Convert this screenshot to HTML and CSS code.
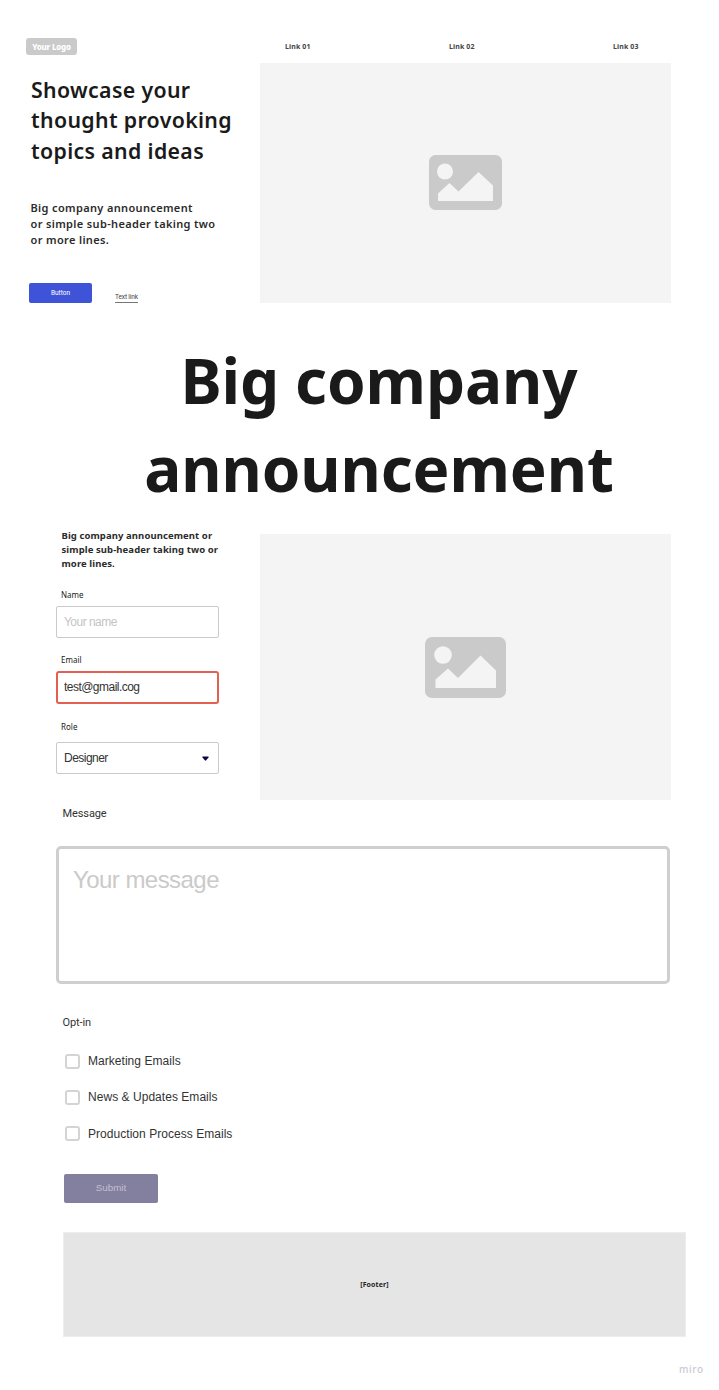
FILE: index.html
```html
<!DOCTYPE html>
<html lang="en">
<head>
<meta charset="utf-8">
<title>Landing page wireframe</title>
<link rel="stylesheet" href="styles.css">
</head>
<body>
<header class="hero">
  <div class="hero-copy">
    <div class="logo">Your Logo</div>
    <h1 class="title">Showcase your<br>thought provoking<br>topics and ideas</h1>
    <p class="subtitle">Big company announcement<br>or simple sub-header taking two<br>or more lines.</p>
    <div class="actions">
      <button class="button">Button</button>
      <a class="text-link">Text link</a>
    </div>
  </div>
  <div class="hero-media">
    <nav class="nav"><a class="nav-link">Link 01</a><a class="nav-link">Link 02</a><a class="nav-link">Link 03</a></nav>
    <div class="placeholder placeholder-hero">
      <svg class="picture" viewBox="0 0 73 55"><rect width="73" height="55" rx="6.5" fill="#cacaca"/><circle cx="16" cy="16.5" r="8" fill="#f4f4f4"/><path d="M9 46V38.5L20.5 28L29.5 36.5L49.500 17L64 30.500V46Z" fill="#f4f4f4"/></svg>
    </div>
  </div>
</header>
<h2 class="headline">Big company<br>announcement</h2>
<form class="form">
  <div class="form-top">
    <div class="fields">
      <p class="intro">Big company announcement or<br>simple sub-header taking two or<br>more lines.</p>
      <label class="label label-name">Name</label>
      <div class="input muted">Your name</div>
      <label class="label label-email">Email</label>
      <div class="input invalid">test@gmail.cog</div>
      <label class="label label-role">Role</label>
      <div class="input select"><span>Designer</span><svg class="caret" viewBox="0 0 7 5"><path d="M1 .5H6Q7 .5 6.500 1.500L4.200 4.300Q3.500 5 2.800 4.300L.5 1.500Q0 .5 1 .5Z" fill="#0d0547"/></svg></div>
    </div>
    <div class="placeholder">
      <svg class="picture picture-large" viewBox="0 0 81 61"><rect width="81" height="61" rx="7" fill="#cacaca"/><circle cx="18" cy="18" r="8.800" fill="#f4f4f4"/><path d="M10.500 51V42.500L23 31.500L33 41L55.500 18.500L71 33.500V51Z" fill="#f4f4f4"/></svg>
    </div>
  </div>
  <label class="group-label">Message</label>
  <div class="message">Your message</div>
  <div class="group-label optin">Opt-in</div>
  <div class="checks">
    <label class="check"><span class="box"></span>Marketing Emails</label>
    <label class="check"><span class="box"></span>News &amp; Updates Emails</label>
    <label class="check"><span class="box"></span>Production Process Emails</label>
  </div>
  <button class="submit" type="button">Submit</button>
</form>
<footer class="footer">[Footer]</footer>
<div class="brand">miro</div>
</body>
</html>
```
FILE: styles.css
```css
* { box-sizing: border-box; }
body { margin: 0; width: 719px; height: 1390px; overflow: hidden; background: #fff; color: #1a1a1a; font-family: "Noto Sans", sans-serif; }
h1, h2, p { margin: 0; white-space: nowrap; }
button { border: 0; padding: 0; display: block; }

.hero { display: grid; grid-template-columns: 234px 411px; padding: 38px 0 0 26px; height: 303px; }
.hero-copy { display: flex; flex-direction: column; }
.logo { width: 51px; height: 17px; border-radius: 3px; background: #cacaca; color: #fff; font: 800 8px/17px "Noto Sans", sans-serif; letter-spacing: -.2px; text-align: center; }
.title { margin: 20px 0 0 5px; font-size: 21.300px; font-weight: 600; line-height: 30.3px; letter-spacing: .34px; }
.subtitle { margin: 34px 0 0 4.500px; font-size: 11px; font-weight: 600; line-height: 16px; letter-spacing: .35px; color: #2b2b2b; }
.actions { display: flex; align-items: flex-end; gap: 23px; margin: auto 0 0 3px; }
.button { width: 63px; height: 20px; border-radius: 2px; background: #3f53d9; color: #fff; font: 6.500px/20px Roboto, sans-serif; }
.text-link { width: 23px; height: 12px; padding-top: 1px; white-space: nowrap; border-bottom: 1px solid #777; font: 6.500px/10px Roboto, sans-serif; letter-spacing: -.12px; color: #444; }
.hero-media { display: flex; flex-direction: column; }
.nav { display: flex; gap: 138px; height: 25px; padding-left: 25px; }
.nav-link { width: 26px; white-space: nowrap; font-size: 7px; font-weight: 700; line-height: 17px; letter-spacing: .12px; color: #444; }
.placeholder { flex: 1; display: flex; align-items: center; justify-content: center; background: #f4f4f4; }
.placeholder-hero { padding-bottom: 2px; }
.picture { width: 73px; height: 55px; }
.picture-large { width: 81px; height: 61px; }

.headline { margin: 33px 0 0 39px; width: 680px; text-align: center; font-size: 62px; font-weight: 700; line-height: 88px; letter-spacing: -.1px; }

.form { display: flex; flex-direction: column; margin-top: 17px; padding-left: 56px; }
.form-top { display: grid; grid-template-columns: 204px 411px; height: 271px; }
.form-top .placeholder { margin-top: 5px; }
.fields { display: flex; flex-direction: column; }
.intro { margin-left: 5.500px; font-size: 9.500px; font-weight: 700; line-height: 14px; letter-spacing: .09px; color: #2b2b2b; }
.label { margin-left: 5px; font: 8px/12px "Noto Sans", sans-serif; }
.label-name { margin-top: 18px; height: 17px; }
.label-email { margin-top: 16px; height: 17px; }
.label-role { margin-top: 17px; height: 21px; }
.input { display: flex; align-items: center; justify-content: space-between; width: 163px; height: 32px; border: 1px solid #cacaca; border-radius: 2px; padding: 0 9px 0 7px; font: 12px "Liberation Sans", Arial, sans-serif; letter-spacing: -.53px; color: #333; }
.input.muted { color: #c4c4c4; }
.input.invalid { height: 33px; padding: 0 8px 1px 6px; border: 2px solid #e2604f; border-radius: 3px; }
.caret { width: 7px; height: 5px; }
.group-label { margin: 7px 0 0 6.500px; height: 14px; font: 11px/14px Roboto, sans-serif; letter-spacing: -.1px; color: #333; }
.message { width: 614px; height: 138px; margin-top: 25px; border: 3px solid #cfcfcf; border-radius: 5px; padding: 14px; font: 24px/33px "Liberation Sans", Arial, sans-serif; letter-spacing: -.55px; color: #cacaca; }
.optin { margin-top: 32px; }
.checks { display: flex; flex-direction: column; margin: 13px 0 0 9px; }
.check { display: flex; align-items: center; gap: 8px; height: 36.300px; font: 12px "Liberation Sans", Arial, sans-serif; letter-spacing: .04px; color: #333; }
.box { width: 15px; height: 15px; border: 2px solid #d4d4d4; border-radius: 3px; }
.submit { width: 94px; height: 29px; margin: 22px 0 0 8px; border-radius: 2px; background: #837f9e; color: #c3c0d0; font: 9.800px/28px "Liberation Sans", Arial, sans-serif; }
.footer { width: 623px; height: 105px; margin: 29px 0 0 63px; border: 1px solid #ededed; background: #e5e5e5; text-align: center; font-size: 7px; font-weight: 700; line-height: 103px; letter-spacing: .12px; color: #222; }
.brand { margin: 25px 0 0 679px; font: 500 10px/14px "Noto Sans", sans-serif; letter-spacing: .6px; color: #cbcad5; }
```
